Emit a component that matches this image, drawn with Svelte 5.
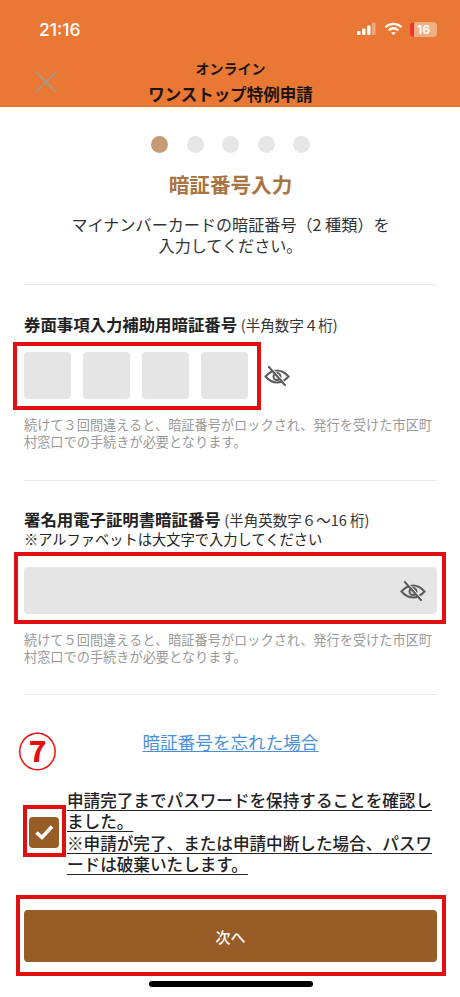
<script>
  const dots = [true, false, false, false, false];
  const boxes = [0, 1, 2, 3];
</script>

{#snippet eye()}
  <svg class="eye" viewBox="0 0 26 22" fill="none" stroke="#5c5c5c" stroke-width="2" stroke-linecap="round">
    <path d="M1.500 11.500C5 7.500 9 5.500 13 5.500s8 2 11.500 6C21 15.500 17 17.500 13 17.500s-8-2-11.500-6Z" />
    <circle cx="13" cy="11.500" r="3.500" />
    <path d="M5 2l16 18" stroke-width="2.200" />
    <path d="M6.500 1.500l16 18" stroke="#fff" stroke-width="1" />
  </svg>
{/snippet}

<div class="page">
  <header class="top">
    <div class="status">
      <span class="time">21:16</span>
      <div class="status-icons">
        <svg width="20" height="14" viewBox="0 0 20 14" fill="#fff">
          <rect x="0" y="9" width="3.500" height="4" rx="1" />
          <rect x="5" y="6.500" width="3.500" height="6.500" rx="1" />
          <rect x="10" y="3.500" width="3.500" height="9.500" rx="1" />
          <rect x="15" y="0.500" width="3.500" height="12.500" rx="1" opacity="0.35" />
        </svg>
        <svg width="19" height="14" viewBox="0 0 19 14" fill="none" stroke="#fff" stroke-width="2.300">
          <path d="M1.500 5.200C6.300.8 12.700.8 17.500 5.200" />
          <path d="M4.700 8.300c3-2.600 6.600-2.600 9.600 0" />
          <path d="M9.500 13.200l-2.300-2.500c1.400-1 3.200-1 4.600 0Z" fill="#fff" stroke="none" />
        </svg>
        <div class="battery"><i class="low"></i><span>16</span></div>
      </div>
    </div>
    <div class="nav">
      <svg class="close" viewBox="0 0 24 24" stroke="#a09a90" stroke-width="1.800" fill="none">
        <path d="M1 1l22 22M23 1L1 23" />
      </svg>
      <div class="nav-title">
        <span class="line1">オンライン</span>
        <span class="line2">ワンストップ特例申請</span>
      </div>
    </div>
  </header>

  <main class="body">
    <div class="dots">
      {#each dots as active}
        <span class="dot" class:active></span>
      {/each}
    </div>
    <h1>暗証番号入力</h1>
    <p class="lead">マイナンバーカードの暗証番号（2 種類）を<br />入力してください。</p>
    <hr class="first" />

    <section class="field">
      <div class="label"><b>券面事項入力補助用暗証番号</b> <small>(半角数字４桁)</small></div>
      <div class="pin-row">
        <div class="frame frame-pin"></div>
        {#each boxes as b}
          <div class="pin" data-i={b}></div>
        {/each}
        {@render eye()}
      </div>
      <p class="note">続けて３回間違えると、暗証番号がロックされ、発行を受けた市区町村窓口での手続きが必要となります。</p>
    </section>
    <hr />

    <section class="field second">
      <div class="label"><b>署名用電子証明書暗証番号</b> <small>(半角英数字６～16 桁)</small></div>
      <div class="sub">※アルファベットは大文字で入力してください</div>
      <div class="input">
        <div class="frame frame-input"></div>
        {@render eye()}
      </div>
      <p class="note">続けて５回間違えると、暗証番号がロックされ、発行を受けた市区町村窓口での手続きが必要となります。</p>
    </section>
    <hr />

    <div class="forgot-wrap">
      <span class="seven">⑦</span>
      <a class="forgot" href="#forgot">暗証番号を忘れた場合</a>
    </div>

    <div class="agree">
      <div class="check">
        <div class="frame frame-check"></div>
        <svg viewBox="0 0 30 30" fill="none" stroke="#fff" stroke-width="3.600">
          <path d="M7.500 15.500l5.500 5 10-11" />
        </svg>
      </div>
      <p>申請完了までパスワードを保持することを確認しました。<br />※申請が完了、または申請中断した場合、パスワードは破棄いたします。</p>
    </div>

    <div class="next">
      <div class="frame frame-next"></div>
      次へ
    </div>
  </main>
  <div class="home"></div>
</div>

<style>
  :global(body) {
    margin: 0;
    background: #fff;
  }
  .page {
    position: relative;
    width: 460px;
    height: 997px;
    overflow: hidden;
    font-family: "Noto Sans CJK JP", "Noto Sans", sans-serif;
    color: #222;
    background: #fff;
  }
  .top {
    height: 107px;
    background: #ea7835;
    display: flex;
    flex-direction: column;
  }
  .status {
    display: flex;
    justify-content: space-between;
    align-items: center;
    padding: 18px 23px 0 39px;
    height: 22px;
  }
  .time {
    font-family: Inter, sans-serif;
    font-size: 17.500px;
    font-weight: 500;
    color: #fff;
  }
  .status-icons {
    display: flex;
    align-items: center;
    gap: 7px;
  }
  .battery {
    position: relative;
    width: 27px;
    height: 15px;
    border-radius: 4px;
    background: rgba(255, 255, 255, 0.4);
    overflow: hidden;
    display: flex;
    align-items: center;
    justify-content: center;
  }
  .battery .low {
    position: absolute;
    left: 0;
    top: 0;
    bottom: 0;
    width: 4px;
    background: #f0332f;
  }
  .battery span {
    font-family: Inter, sans-serif;
    font-size: 12px;
    font-weight: 700;
    color: #fff;
    line-height: 15px;
  }
  .nav {
    position: relative;
    flex: 1;
  }
  .close {
    position: absolute;
    left: 35px;
    top: 31px;
    width: 22px;
    height: 22px;
  }
  .nav-title {
    display: flex;
    flex-direction: column;
    align-items: center;
    padding-top: 17px;
    font-weight: 700;
    color: #1c1410;
    margin-left: 1px;
  }
  .line1 {
    font-size: 14px;
    line-height: 22px;
  }
  .line2 {
    font-size: 16.500px;
    line-height: 26px;
    margin-top: 2px;
  }
  .body {
    padding: 0 23px 0 24px;
    display: flex;
    flex-direction: column;
  }
  .dots {
    display: flex;
    justify-content: center;
    gap: 18.500px;
    margin-top: 29px;
  }
  .dot {
    width: 17px;
    height: 17px;
    border-radius: 50%;
    background: #e6e6e6;
  }
  .dot.active {
    background: #c79b73;
  }
  h1 {
    margin: 15px 0 0;
    font-size: 20.600px;
    line-height: 32px;
    font-weight: 700;
    color: #a87441;
    text-align: center;
  }
  .lead {
    margin: 14px 0 0;
    font-size: 16.100px;
    line-height: 20.500px;
    text-align: center;
    color: #333;
  }
  hr {
    width: 100%;
    height: 1px;
    margin: 0;
    border: 0;
    background: #e9e9e9;
  }
  hr.first {
    margin-top: 29px;
  }
  .field {
    display: flex;
    flex-direction: column;
    padding-top: 28px;
    height: 195px;
    box-sizing: border-box;
  }
  .field.second {
    padding-top: 27px;
    height: 213px;
  }
  .label {
    font-size: 16.400px;
    line-height: 22px;
    color: #222;
    white-space: nowrap;
  }
  .label b {
    font-weight: 700;
  }
  .label small {
    font-size: 14.500px;
    font-weight: 400;
    color: #333;
  }
  .sub {
    font-size: 14.250px;
    line-height: 18px;
    color: #222;
    margin-top: -1px;
    white-space: nowrap;
  }
  .pin-row {
    position: relative;
    display: flex;
    gap: 12px;
    align-items: center;
    margin-top: 16px;
  }
  .pin {
    width: 47px;
    height: 47px;
    border-radius: 4px;
    background: #e5e5e5;
  }
  .eye {
    width: 26px;
    height: 22px;
  }
  .pin-row .eye {
    margin-left: 4px;
  }
  .note {
    margin: 17px 0 0;
    font-size: 13.200px;
    line-height: 17px;
    color: #999;
  }
  .input {
    position: relative;
    display: flex;
    align-items: center;
    justify-content: flex-end;
    height: 47px;
    margin-top: 19px;
    padding-right: 11px;
    border-radius: 4px;
    background: #e5e5e5;
  }
  .frame {
    position: absolute;
    box-sizing: border-box;
    border: 4px solid #e01010;
    pointer-events: none;
  }
  .frame-pin {
    left: -11px;
    top: -10px;
    width: 248px;
    height: 68px;
  }
  .frame-input {
    left: -10px;
    top: -15px;
    width: 432px;
    height: 72px;
  }
  .frame-check {
    left: -6px;
    top: -12px;
    width: 43px;
    height: 52px;
  }
  .frame-next {
    left: -8px;
    top: -15px;
    width: 430px;
    height: 81px;
  }
  .forgot-wrap {
    position: relative;
    text-align: center;
    margin-top: 34px;
    line-height: 26px;
  }
  .forgot {
    font-size: 17.600px;
    color: #4a90d9;
    text-decoration: underline;
    text-underline-offset: 2px;
  }
  .seven {
    position: absolute;
    left: -6px;
    top: -2px;
    font-size: 39px;
    line-height: 44px;
    font-weight: 700;
    color: #e60d0d;
  }
  .agree {
    display: flex;
    align-items: center;
    margin-top: 35px;
  }
  .check {
    position: relative;
    flex: none;
    width: 30px;
    height: 31px;
    margin-left: 5px;
    border-radius: 4px;
    background: #985c27;
  }
  .check svg {
    display: block;
    width: 30px;
    height: 30px;
  }
  .agree p {
    margin: 0 0 0 8px;
    font-size: 16.600px;
    line-height: 21.300px;
    font-weight: 500;
    color: #222;
    text-decoration: underline;
    text-underline-offset: 3px;
  }
  .next {
    position: relative;
    display: flex;
    align-items: center;
    justify-content: center;
    height: 52px;
    margin-top: 35px;
    border-radius: 4px;
    background: #985c27;
    color: #fff;
    font-size: 15px;
    font-weight: 500;
  }
  .home {
    position: absolute;
    left: 149px;
    bottom: 10px;
    width: 164px;
    height: 6px;
    border-radius: 3px;
    background: #000;
  }
</style>
